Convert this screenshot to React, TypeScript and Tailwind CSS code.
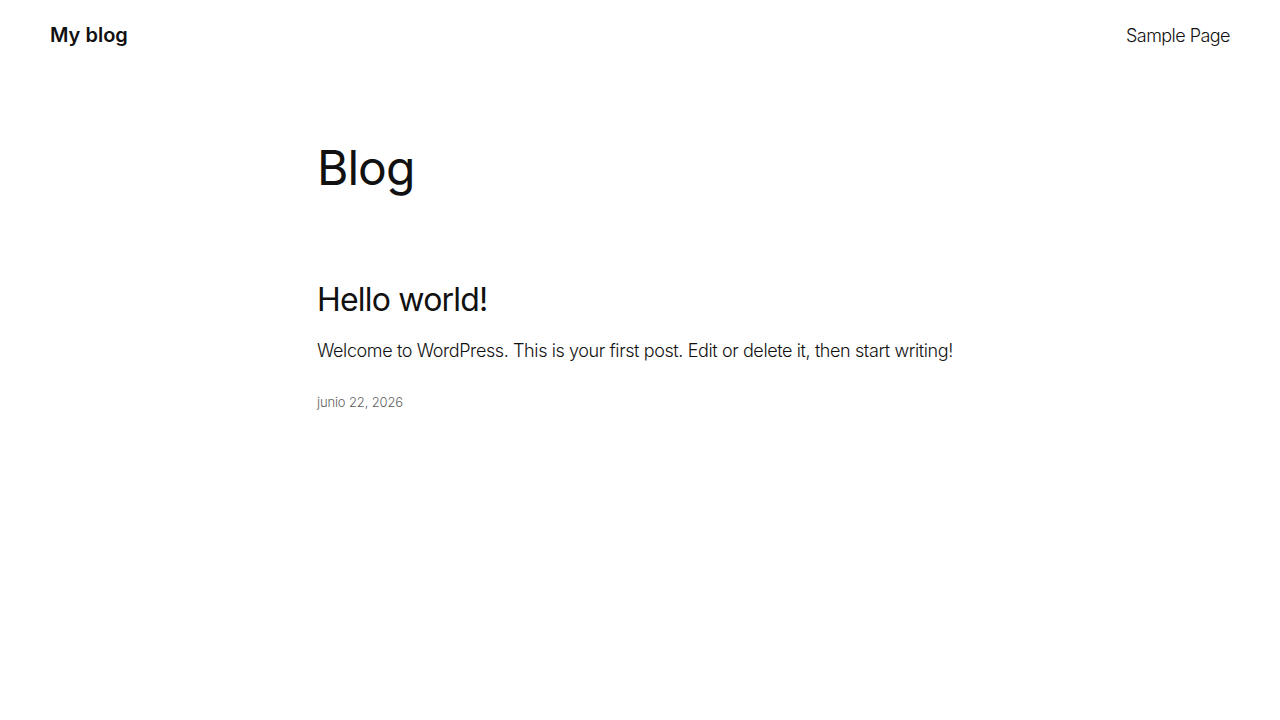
import React from 'react';

const font = { fontFamily: 'Inter, "Noto Sans", sans-serif' };

export default function App() {
  return (
    <div className="min-h-screen bg-white text-[#111111]" style={font}>
      {/* Header */}
      <header className="flex h-[70px] items-center justify-between px-[50px]">
        <a className="text-[20px] font-semibold">My blog</a>
        <nav>
          <a className="text-[18px] font-light tracking-[-0.03em]">Sample Page</a>
        </nav>
      </header>

      {/* Main */}
      <main className="mx-auto w-[646px] pt-[69px]">
        <h1 className="text-[48px] font-normal leading-[1.2] tracking-[-0.02em]">Blog</h1>

        <article className="mt-[84px]">
          <h2 className="text-[32px] font-normal leading-[1.2] tracking-[-0.025em]">Hello world!</h2>
          <p className="mt-[18px] text-[18px] font-light leading-[1.5] tracking-[-0.022em]">
            Welcome to WordPress. This is your first post. Edit or delete it, then start writing!
          </p>
          <p className="mt-[29px] text-[13px] font-light tracking-[-0.01em] text-[#5f5f5f]">junio 22, 2026</p>
        </article>
      </main>
    </div>
  );
}
